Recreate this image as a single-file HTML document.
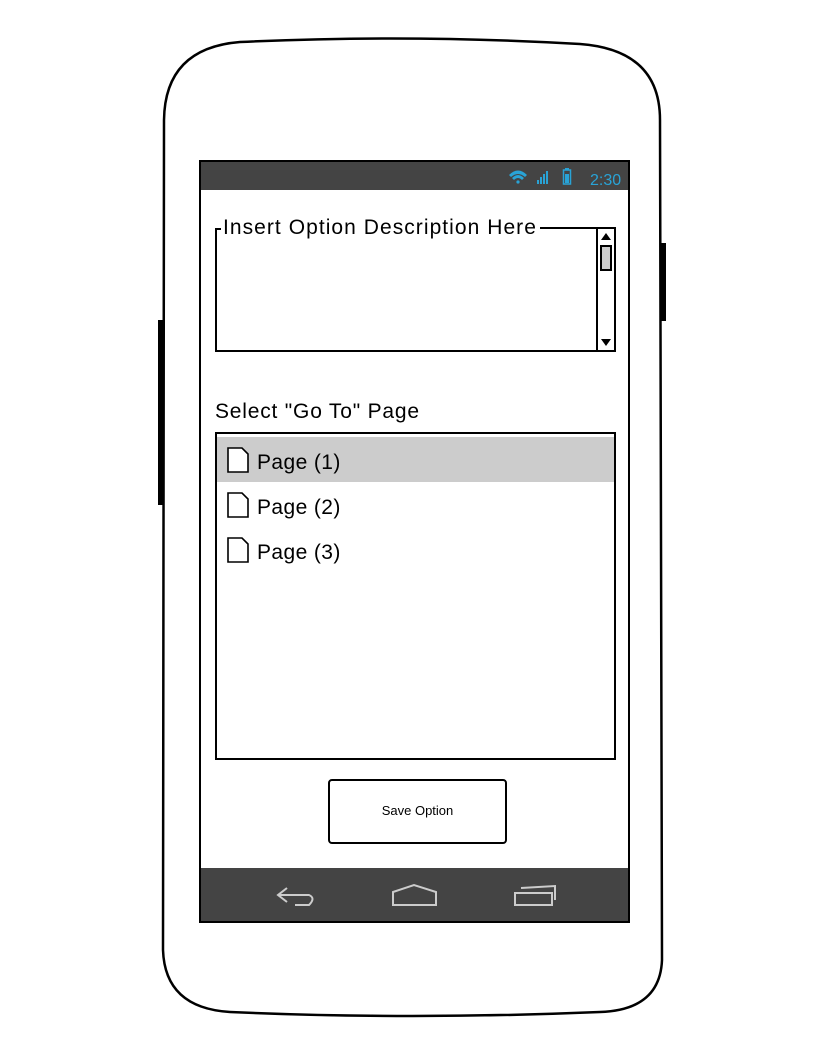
<!DOCTYPE html>
<html><head><style>
body{margin:0;width:819px;height:1056px;background:#fff;position:relative;overflow:hidden;font-family:"Liberation Sans",sans-serif;}
.a{position:absolute;}
</style></head><body>
<svg class="a" style="left:0;top:0" width="819" height="1056">
<path d="M240,42 Q410,34 580,44 Q660,50 660,120 L662,960 Q660,1010 600,1012 Q410,1020 230,1012 Q165,1008 163,950 L164,120 Q165,48 240,42 Z" fill="none" stroke="#000" stroke-width="2.5"/>
<rect x="158" y="320" width="6" height="185" fill="#000"/>
<rect x="660" y="243" width="6" height="78" fill="#000"/>
<rect x="200" y="161" width="429" height="761" fill="#fff" stroke="#000" stroke-width="2"/>
<rect x="201" y="162" width="427" height="28" fill="#444"/>
<rect x="201" y="868" width="427" height="53" fill="#444"/>
<g fill="none" stroke="#ccc" stroke-width="2">
<path d="M287,888 L278,895 L287,902 M279,895 L309,895 Q316,898 309,905 L295,905"/>
<path d="M393,905 L393,892 L414,885 L436,892 L436,905 Z"/>
<path d="M515,893 L552,893 L552,905 L515,905 Z M521,888 L555,886 L555,900"/>
</g>
<g fill="#29a3d6">
<path d="M509,175 Q518,166 527,175 L525,177 Q518,171 511,177Z M512,178 Q518,172 524,178 L522,180 Q518,176 514,180Z"/><circle cx="518" cy="182" r="1.6"/>
<rect x="537" y="180" width="2" height="4"/><rect x="540" y="177" width="2" height="7"/><rect x="543" y="174" width="2" height="10"/><rect x="546" y="171" width="2" height="13"/>
<rect x="565" y="168" width="4" height="2"/>
</g>
<rect x="563.5" y="170" width="7" height="14" fill="none" stroke="#29a3d6" stroke-width="1.5"/>
<rect x="565" y="174" width="4" height="9" fill="#29a3d6"/>
<text x="590" y="185" fill="#29a3d6" font-size="16">2:30</text>
<path d="M216,238 L216,351 L615,351 L615,228 L540,228 M216,238 L216,229 L221,229" fill="none" stroke="#000" stroke-width="2"/>
<rect x="597" y="228" width="18" height="123" fill="#fff" stroke="#000" stroke-width="2"/>
<path d="M601,240 L606,233 L611,240Z M601,339 L611,339 L606,346Z" fill="#000"/>
<rect x="601" y="246" width="10" height="24" fill="#ccc" stroke="#000" stroke-width="2"/>
<rect x="216" y="433" width="399" height="326" fill="#fff" stroke="#000" stroke-width="2"/>
<rect x="217" y="437" width="397" height="45" fill="#ccc"/>
<g fill="#fff" stroke="#000" stroke-width="1.6">
<path d="M228,448 L242,448 L248,454 L248,472 L228,472Z"/>
<path d="M228,493 L242,493 L248,499 L248,517 L228,517Z"/>
<path d="M228,538 L242,538 L248,544 L248,562 L228,562Z"/>
</g>
<rect x="329" y="780" width="177" height="63" rx="3" fill="#fff" stroke="#000" stroke-width="2"/>
</svg>
<div class="a" style="left:223px;top:216px;font-size:21px;background:#fff;padding-right:1px;letter-spacing:1.05px">Insert Option Description Here</div>
<div class="a" style="left:215px;top:400px;font-size:21px;letter-spacing:0.8px">Select "Go To" Page</div>
<div class="a" style="left:257px;top:451px;font-size:21px;letter-spacing:0.4px">Page (1)</div>
<div class="a" style="left:257px;top:496px;font-size:21px;letter-spacing:0.4px">Page (2)</div>
<div class="a" style="left:257px;top:541px;font-size:21px;letter-spacing:0.4px">Page (3)</div>
<div class="a" style="left:329px;top:803px;width:177px;text-align:center;font-size:13px">Save Option</div>
</body></html>
